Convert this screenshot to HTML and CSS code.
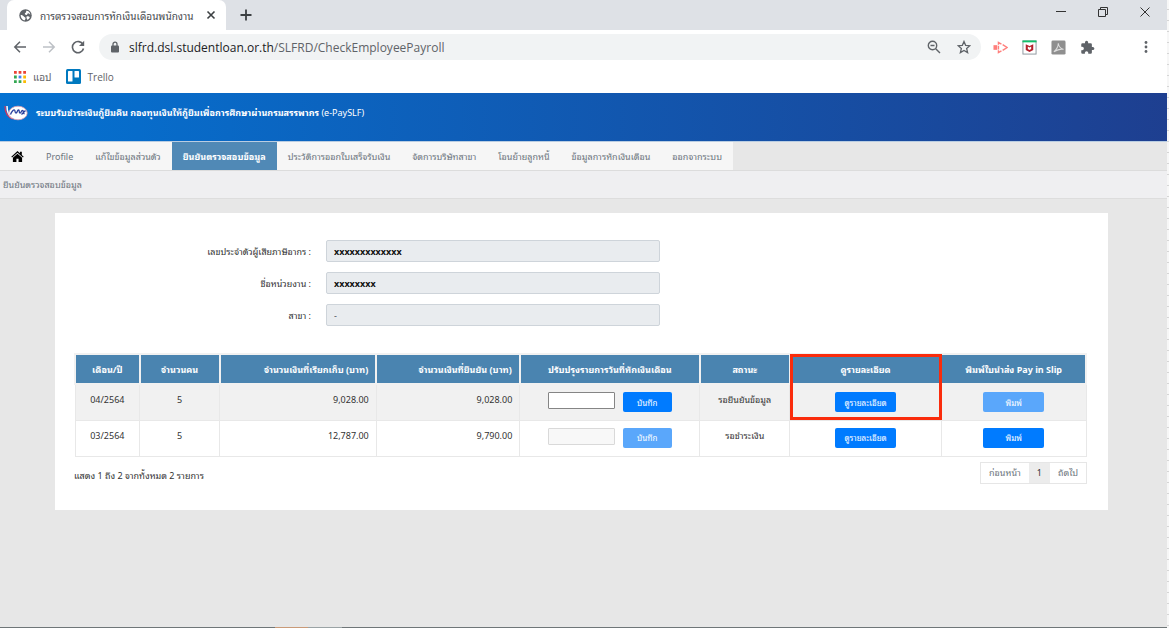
FILE: index.html
```html
<!DOCTYPE html>
<html lang="th">
<head>
  <meta charset="utf-8">
  <title>การตรวจสอบการหักเงินเดือนพนักงาน</title>
  <link rel="stylesheet" href="styles.css">
</head>
<body>
  <div class="desktop">
    <div class="browser">
      <!-- Tab strip -->
      <div class="tab-strip">
        <div class="tab">
          <svg class="tab-icon" viewBox="0 0 24 24">
            <circle cx="12" cy="12" r="11.500" fill="#5f6368"/>
            <path d="M3 11c3 0 5 1 6 3s3 1 3 3-1 3-2 4c-4-1-7-5-7-10zM13 3c5 0 7 3 8 7-2 0-2-2-4-2s-1 3-3 3-4-1-3-3 3-1 2-5zM14 14c3-1 5 0 6 1-1 3-3 4-5 5 0-2-2-4-1-6z" fill="#fff"/>
          </svg>
          <span class="tab-title">การตรวจสอบการหักเงินเดือนพนักงาน</span>
          <button class="icon-btn tab-close" title="Close tab">
            <svg viewBox="0 0 10 10"><path d="M1.500 1.500l7 7M8.500 1.500l-7 7" fill="none" stroke="#3c4043" stroke-width="1.600"/></svg>
          </button>
        </div>
        <button class="icon-btn new-tab" title="New tab">
          <svg viewBox="0 0 12 12"><path d="M6 0.500v11M0.500 6h11" stroke="#3c4043" stroke-width="1.800"/></svg>
        </button>
        <div class="window-controls">
          <button class="icon-btn" title="Minimize">
            <svg viewBox="0 0 10 10"><path d="M0 4.500h10" stroke="#333" stroke-width="1"/></svg>
          </button>
          <button class="icon-btn" title="Restore">
            <svg viewBox="0 0 10 10"><path d="M0.500 2.500h7v7h-7zM2.500 2.500v-2h7v7h-2" fill="none" stroke="#333" stroke-width="1"/></svg>
          </button>
          <button class="icon-btn" title="Close">
            <svg viewBox="0 0 10 10"><path d="M0.500 0.500l9 9M9.500 0.500l-9 9" stroke="#333" stroke-width="1"/></svg>
          </button>
        </div>
      </div>

      <!-- Toolbar -->
      <div class="toolbar">
        <div class="nav-buttons">
          <button class="icon-btn" title="Back">
            <svg viewBox="0 0 14 14"><path d="M13 7H2M7 1.800L1.800 7 7 12.200" fill="none" stroke="#5f6368" stroke-width="1.500"/></svg>
          </button>
          <button class="icon-btn" title="Forward">
            <svg viewBox="0 0 14 14"><path d="M1 7H12M7 1.800L12.200 7 7 12.200" fill="none" stroke="#bdc1c6" stroke-width="1.500"/></svg>
          </button>
          <button class="icon-btn" title="Reload">
            <svg viewBox="0 0 14 14"><path d="M12 4.500A5.600 5.600 0 1 0 12.500 8.500" fill="none" stroke="#5f6368" stroke-width="1.600"/><path d="M13.200 0.800v5.200H8z" fill="#5f6368"/></svg>
          </button>
        </div>
        <div class="address-bar">
          <svg class="lock-icon" viewBox="0 0 10 12"><path d="M3 5V3.200a2 2 0 0 1 4 0V5" fill="none" stroke="#5f6368" stroke-width="1.300"/><rect x="1" y="4.500" width="8" height="7" rx="1" fill="#5f6368"/></svg>
          <span class="url"><b>slfrd.dsl.studentloan.or.th</b>/SLFRD/CheckEmployeePayroll</span>
          <button class="icon-btn" title="Zoom">
            <svg viewBox="0 0 14 14"><circle cx="5.500" cy="5.500" r="4.200" fill="none" stroke="#5f6368" stroke-width="1.400"/><path d="M8.700 8.700l4.300 4.300M3.500 5.500h4" stroke="#5f6368" stroke-width="1.400"/></svg>
          </button>
          <button class="icon-btn" title="Bookmark this page">
            <svg viewBox="0 0 24 24"><path d="M12 2.500l2.800 6.700 7.200.6-5.500 4.700 1.700 7.100-6.200-3.800-6.200 3.800 1.700-7.100L2 9.800l7.200-.6z" fill="none" stroke="#5f6368" stroke-width="2.200"/></svg>
          </button>
        </div>
        <div class="extensions">
          <button class="icon-btn" title="Screen recorder">
            <svg viewBox="0 0 16 16"><path d="M0.500 5.500h4v5h-4z" fill="#ff7f7c"/><path d="M5.800 5V2.500L9 4.300M5.800 11v2.500L9 11.700M5.800 6v4M10.300 5L15 8l-4.700 3" fill="none" stroke="#ff7f7c" stroke-width="1.500"/></svg>
          </button>
          <button class="icon-btn" title="WebAdvisor">
            <svg viewBox="0 0 16 16"><rect x="1" y="1" width="14" height="14" fill="#fff" stroke="#8c959c"/><path d="M0.500 0.500h15v2H0.500z" fill="#12c06a"/><path d="M4 4.500l4 1.800 4-1.800v6.200L8 12.700l-4-2zM6.200 7v2.700l1.800.9 1.800-.9V7L8 8z" fill="#b5202c" fill-rule="evenodd"/></svg>
          </button>
          <button class="icon-btn" title="PDF">
            <svg viewBox="0 0 16 16"><rect x="0.500" y="0.500" width="15" height="15" rx="1.500" fill="#8f8f8f"/><path d="M3 12.500c2-1 5-5.500 4.800-9 .2 3 2.700 6.200 5.500 6.500-3-.8-6.300.2-10.300 2.500z" fill="none" stroke="#dedede" stroke-width="1.100"/></svg>
          </button>
          <button class="icon-btn" title="Extensions">
            <svg viewBox="0 0 24 24"><path d="M20.500 11H19V7a2 2 0 0 0-2-2h-4V3.500a2.500 2.500 0 0 0-5 0V5H4a2 2 0 0 0-2 2v3.800h1.500a2.700 2.700 0 0 1 0 5.400H2V20a2 2 0 0 0 2 2h3.800v-1.500a2.700 2.700 0 0 1 5.400 0V22H17a2 2 0 0 0 2-2v-4h1.500a2.500 2.500 0 0 0 0-5z" fill="#5f6368"/></svg>
          </button>
        </div>
        <button class="icon-btn menu-btn" title="Menu">
          <svg viewBox="0 0 14 14"><g fill="#5f6368"><circle cx="7" cy="2.500" r="1.400"/><circle cx="7" cy="7" r="1.400"/><circle cx="7" cy="11.500" r="1.400"/></g></svg>
        </button>
      </div>

      <!-- Bookmarks -->
      <div class="bookmarks">
        <a class="bookmark" href="#">
          <svg class="apps-icon" viewBox="0 0 13 13">
            <path d="M0 0h3v3H0zM5 0h3v3H5zM10 0h3v3h-3z" fill="#ea4335"/>
            <path d="M0 5h3v3H0zM0 10h3v3H0zM5 10h3v3H5z" fill="#34a853"/>
            <path d="M5 5h3v3H5z" fill="#4285f4"/>
            <path d="M10 5h3v3h-3zM10 10h3v3h-3z" fill="#fbbc04"/>
          </svg>
          แอป
        </a>
        <a class="bookmark" href="#">
          <svg class="trello-icon" viewBox="0 0 15 15"><rect width="15" height="15" rx="1.500" fill="#0079bf"/><rect x="2" y="2" width="4.500" height="10.500" rx="0.500" fill="#fff"/><rect x="8.500" y="2" width="4.500" height="6.500" rx="0.500" fill="#fff"/></svg>
          Trello
        </a>
      </div>

      <!-- Web page -->
      <div class="page">
        <header class="site-header">
          <svg class="logo" viewBox="0 0 24 16">
            <path d="M1 1c0 6 2 11 8 13" fill="none" stroke="#d8355a" stroke-width="1.200"/>
            <path d="M3 1c0 5 1 9 5 12" fill="none" stroke="#fff" stroke-width="1.500"/>
            <ellipse cx="14" cy="8" rx="9.200" ry="6.800" fill="#fff" stroke="#e4a0b0" stroke-width="0.800"/>
            <path d="M6.500 9.500c1-3 3-5 4-4.500s0 3 1.500 3 1-3 2.500-3 0 3 1.500 3 1-2.500 2.500-2.500.5 3 2 3.500M17.500 9.500l4-4" fill="none" stroke="#2a3f9d" stroke-width="1.300"/>
          </svg>
          <h1><b>ระบบรับชำระเงินกู้ยืมคืน กองทุนเงินให้กู้ยืมเพื่อการศึกษาผ่านกรมสรรพากร</b> (e-PaySLF)</h1>
        </header>

        <nav class="main-nav">
          <div class="menu">
            <a class="home" href="#" title="Home">
              <svg viewBox="0 0 24 22"><path d="M12 1L0.500 11.500 2 13 12 4l10 9 1.500-1.500L20 8.300V2h-3.500v3.200z"/><path d="M12 6l-8.500 7.500V21H10v-6h4v6h6.500v-7.500z"/></svg>
            </a>
            <a href="#">Profile</a>
            <a href="#">แก้ไขข้อมูลส่วนตัว</a>
            <a class="active" href="#">ยืนยันตรวจสอบข้อมูล</a>
            <a href="#">ประวัติการออกใบเสร็จรับเงิน</a>
            <a href="#">จัดการบริษัทสาขา</a>
            <a href="#">โอนย้ายลูกหนี้</a>
            <a href="#">ข้อมูลการหักเงินเดือน</a>
            <a href="#">ออกจากระบบ</a>
          </div>
        </nav>
        <div class="breadcrumb">ยืนยันตรวจสอบข้อมูล</div>

        <main class="content">
          <div class="card">
            <form class="employer">
              <label for="taxId">เลขประจำตัวผู้เสียภาษีอากร :</label>
              <input class="masked" type="text" id="taxId" value="xxxxxxxxxxxxx" readonly>
              <label for="orgName">ชื่อหน่วยงาน :</label>
              <input class="masked" type="text" id="orgName" value="xxxxxxxx" readonly>
              <label for="branch">สาขา :</label>
              <input type="text" id="branch" value="-" readonly>
            </form>

            <table class="payroll">
              <colgroup>
                <col class="col-month"><col class="col-count"><col class="col-billed"><col class="col-confirmed">
                <col class="col-date"><col class="col-status"><col class="col-detail"><col class="col-print">
              </colgroup>
              <thead>
                <tr>
                  <th>เดือน/ปี</th>
                  <th>จำนวนคน</th>
                  <th class="money">จำนวนเงินที่เรียกเก็บ (บาท)</th>
                  <th class="money">จำนวนเงินที่ยืนยัน (บาท)</th>
                  <th>ปรับปรุงรายการวันที่หักเงินเดือน</th>
                  <th>สถานะ</th>
                  <th class="marked">ดูรายละเอียด</th>
                  <th>พิมพ์ใบนำส่ง Pay in Slip</th>
                </tr>
              </thead>
              <tbody>
                <tr>
                  <td>04/2564</td>
                  <td>5</td>
                  <td class="money">9,028.00</td>
                  <td class="money">9,028.00</td>
                  <td>
                    <div class="date-edit">
                      <input type="text" aria-label="วันที่หักเงินเดือน 04/2564">
                      <button class="btn btn-save">บันทึก</button>
                    </div>
                  </td>
                  <td>รอยืนยันข้อมูล</td>
                  <td><button class="btn">ดูรายละเอียด</button></td>
                  <td><button class="btn" disabled>พิมพ์</button></td>
                </tr>
                <tr>
                  <td>03/2564</td>
                  <td>5</td>
                  <td class="money">12,787.00</td>
                  <td class="money">9,790.00</td>
                  <td>
                    <div class="date-edit">
                      <input type="text" aria-label="วันที่หักเงินเดือน 03/2564" disabled>
                      <button class="btn btn-save" disabled>บันทึก</button>
                    </div>
                  </td>
                  <td>รอชำระเงิน</td>
                  <td><button class="btn">ดูรายละเอียด</button></td>
                  <td><button class="btn">พิมพ์</button></td>
                </tr>
              </tbody>
            </table>

            <div class="table-footer">
              <span class="row-info">แสดง 1 ถึง 2 จากทั้งหมด 2 รายการ</span>
              <div class="pagination">
                <a href="#">ก่อนหน้า</a>
                <a class="current" href="#">1</a>
                <a href="#">ถัดไป</a>
              </div>
            </div>
          </div>
        </main>
      </div>
      <div class="taskbar-edge"></div>
    </div>
    <!-- Sheet showing behind the window -->
    <div class="sheet-edge"></div>
  </div>
</body>
</html>
```
FILE: styles.css
```css
*,
*::after {
  box-sizing: border-box;
}
body {
  margin: 0;
  font-family: "Noto Sans", "Noto Sans Thai Looped", "Leelawadee UI", Loma, "Noto Sans Thai", sans-serif;
  font-size: 9px;
  color: #333;
}
a {
  color: inherit;
  text-decoration: none;
}
button,
input {
  font-family: inherit;
}
.desktop {
  display: flex;
  min-height: 100vh;
}
.browser {
  flex: 1;
  display: flex;
  flex-direction: column;
  background: #fff;
}
.taskbar-edge {
  height: 1px;
  background: linear-gradient(90deg, #6f7678 275px, #c99a78 275px 308px, #9aa3a5 308px 342px, #6f7678 342px);
}
.sheet-edge {
  width: 2px;
  background: repeating-linear-gradient(#f7f7f7 0 9px, #d5d5d5 9px 10px, #f7f7f7 10px 11px);
}
.icon-btn {
  display: flex;
  align-items: center;
  justify-content: center;
  padding: 0;
  border: none;
  background: none;
}
.icon-btn svg {
  display: block;
  width: 14px;
  height: 14px;
}

/* Tab strip */
.tab-strip {
  display: flex;
  align-items: center;
  height: 30px;
  padding-left: 7px;
  background: #dee1e6;
}
.tab {
  display: flex;
  align-items: center;
  width: 219px;
  height: 30px;
  padding: 0 10px 0 12px;
  border-radius: 7px 7px 0 0;
  background: #fff;
}
.tab-icon {
  width: 13px;
  height: 13px;
  margin-right: 8px;
}
.tab-title {
  flex: 1;
  font-size: 10px;
  color: #45494d;
  white-space: nowrap;
}
.tab-close svg {
  width: 10px;
  height: 10px;
}
.new-tab {
  margin-left: 14px;
}
.new-tab svg {
  width: 12px;
  height: 12px;
}
.window-controls {
  display: flex;
  gap: 32px;
  margin: 0 17px 6px auto;
}
.window-controls svg {
  width: 10px;
  height: 10px;
}

/* Toolbar */
.toolbar {
  display: flex;
  align-items: center;
  height: 34px;
  padding: 0 14px 0 13px;
}
.nav-buttons {
  display: flex;
  gap: 15px;
  margin-right: 14px;
}
.address-bar {
  flex: 1;
  display: flex;
  align-items: center;
  gap: 16px;
  height: 26px;
  padding: 0 10px 0 11px;
  border-radius: 13px;
  background: #f1f3f4;
}
.lock-icon {
  width: 10px;
  height: 12px;
  margin-right: -7px;
}
.url {
  flex: 1;
  font-family: "Open Sans", sans-serif;
  font-size: 12px;
  color: #5f6368;
}
.url b {
  font-weight: normal;
  color: #202124;
}
.extensions {
  display: flex;
  gap: 14px;
  margin: 0 44px 0 12px;
}
.extensions svg {
  width: 15px;
  height: 15px;
}

/* Bookmarks */
.bookmarks {
  display: flex;
  align-items: center;
  gap: 14px;
  height: 29px;
  padding: 0 14px 4px;
  font-family: "Open Sans", "Noto Sans Thai Looped", "Leelawadee UI", Loma, "Noto Sans Thai", sans-serif;
  font-size: 10px;
  color: #5f6368;
}
.bookmark {
  display: flex;
  align-items: center;
  gap: 7px;
}
.apps-icon {
  width: 12px;
  height: 12px;
}
.trello-icon {
  width: 15px;
  height: 15px;
}

/* Site header */
.page {
  flex: 1;
  background: #e7e7e7;
}
.site-header {
  display: flex;
  align-items: flex-start;
  height: 48px;
  padding: 12px 4px;
  gap: 8px;
  background: linear-gradient(90deg, #0472d2, #1e3f90);
  color: #fff;
}
.logo {
  width: 24px;
  height: 16px;
}
.site-header h1 {
  margin: 0;
  font-size: 9px;
  font-weight: normal;
  line-height: 16px;
}
.main-nav {
  display: flex;
  height: 30px;
  border-top: 1px solid #b9cde2;
  border-bottom: 1px solid #dcdcdc;
}
.menu {
  display: flex;
  background: #f6f6f6;
}
.menu a {
  display: flex;
  align-items: center;
  padding: 0 11px;
  color: #6c757d;
  white-space: nowrap;
}
.menu .home svg {
  width: 13px;
  height: 13px;
  fill: #000;
}
.menu .active {
  background: #5089b6;
  color: #fff;
  font-weight: bold;
}
.breadcrumb {
  height: 28px;
  padding: 0 3px;
  border-bottom: 1px solid #ddd;
  background: #efeff1;
  color: #6c757d;
  line-height: 28px;
}

/* Content */
.content {
  padding: 14px 59px 0 55px;
}
.card {
  padding: 27px 21px 26px 19px;
  background: #fff;
}
.employer {
  display: grid;
  grid-template-columns: 237px 334px;
  gap: 10px 15px;
  align-items: center;
}
.employer label {
  text-align: right;
}
.employer input {
  height: 22px;
  padding: 0 7px;
  border: 1px solid #ced4da;
  border-radius: 2px;
  background: #e9ecef;
  color: #495057;
  font-size: 9px;
}
.employer .masked {
  color: #111;
  font-weight: bold;
}

/* Payroll table */
.payroll {
  width: 100%;
  margin-top: 27px;
  border-collapse: collapse;
  table-layout: fixed;
}
.col-month { width: 6.4%; }
.col-count { width: 7.9%; }
.col-billed { width: 15.5%; }
.col-confirmed { width: 14.2%; }
.col-date { width: 17.8%; }
.col-status { width: 8.9%; }
.col-detail { width: 15%; }
.col-print { width: 14.3%; }
.payroll th {
  position: relative;
  height: 30px;
  padding: 0 7px;
  border: 2px solid #f1f1f1;
  background: #4a84b0;
  color: #fff;
  white-space: nowrap;
}
.payroll td {
  height: 36px;
  padding: 7px 7px 0;
  border: 1px solid #e8e8e8;
  text-align: center;
  vertical-align: top;
  line-height: 16px;
}
.payroll tbody tr:nth-child(odd) {
  background: #f1f1f1;
}
.payroll .money {
  text-align: right;
}
/* Red frame around the detail column heading and its first button */
.payroll .marked::after {
  content: "";
  position: absolute;
  top: -1px;
  right: -2px;
  left: -1px;
  height: 66px;
  border: 3px solid #fa2c0c;
}
.date-edit {
  display: flex;
  justify-content: center;
  gap: 8px;
}
.date-edit input {
  width: 67px;
  height: 17px;
  border: 1px solid #858585;
  border-radius: 1px;
  background: #fff;
}
.date-edit input:disabled {
  border-color: #d9d9d9;
  background: #f8f8f8;
}
.btn {
  width: 61px;
  height: 20px;
  padding: 0;
  border: none;
  border-radius: 2px;
  background: #007bff;
  color: #fff;
  font-size: 8px;
}
.btn:disabled {
  background: #5aa7fb;
}
.btn-save {
  width: 49px;
}
.table-footer {
  display: flex;
  justify-content: space-between;
  align-items: center;
  margin-top: 5px;
}
.row-info {
  padding-top: 4px;
}
.pagination {
  display: flex;
  border: 1px solid #e6e6e6;
  color: #6c757d;
  line-height: 20px;
}
.pagination a {
  padding: 0 8px;
}
.pagination .current {
  background: #ececec;
  color: #333;
}
```
